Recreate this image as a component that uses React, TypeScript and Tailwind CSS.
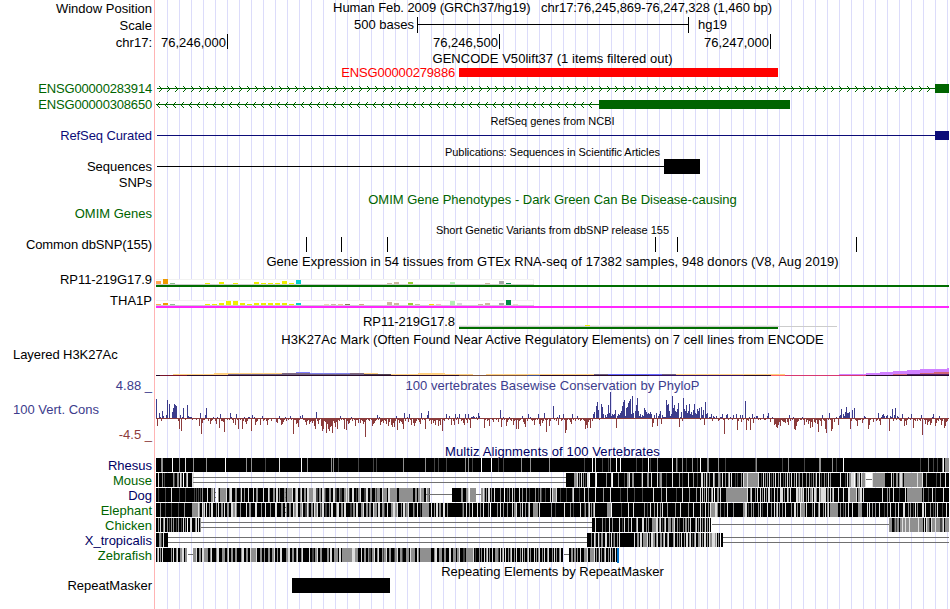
import React from "react";

type Chunk = [number, string];
type Rect = [number, number, number, number, string];

const SHADES: Record<string, string> = {
  "#": "#000000",
  d: "#444444",
  g: "#909090",
  l: "#dedede",
};

// Alignment shading, one character per pixel, each chunk starting at its x.
const MOUSE: Chunk[] = [
  [156, "##l###g#d########gd##gg#lg#.##gl####ll"],
  [566, "########gggl#g#l#g#d#ll.#####l.#########g####l.#####g#####d##ggl"],
  [630, "##gg#######dl####gg##l#####l#dgg####d#####l######g##d#####l####g###d#"],
  [699, "##ll#g#ld#g###lg###ggd#l##g##gl#l###d#d###g#lggglggggggggggl##d#l#g#g#l#d#"],
  [773, "g#l##g#l##d#g#l#g#l##g#l#dg##g###g##g#d#g#dl##l#d##g#d#l#g#########l"],
  [841, "####d#l#gglll.g#ggl#lgggl"],
  [872, "lgggggggggggg######l#g##gg#gllg#ggggggggggggglggggl###g#########d###g####l###"],
];
const DOG: Chunk[] = [
  [156, "##d######d#####l#######d#####d########d#d#d#d#g##"],
  [205, "##l###ggld"],
  [218, "g#ggggggl##gll###gg###dl##g###l####l##gg#####l####lg###gg#ll#g####gg##l"],
  [287, "gggggl##gll##gl##gg#llggggllldd#gg#llgd###gg##lldd##gdd##gglgld##ll##d#ggl##dd"],
  [362, "##ddll##gg###gdggg##lgggg#llggggggg##gggggggggggggg##gg#gglggg##lggd"],
  [452, "#########gg###ggl.gggggg"],
  [481, "gglg#g#ll#g##l#####g###.##d#g##l#g####l##g###g##d#####g##d#gd###d####"],
  [550, "l#lgggl###d#####d#####gl#####d####l###g######l#######g######l###"],
  [614, "######d######g######d#######d##########l#######g####l#########d#####l"],
  [683, "######g######g###l#l#g#l#g##gl#.##gg#l#####gggggggggggggggggggggl##gl#"],
  [753, "##g#l##l#g#l#g#ll#d##l##g##lll#g##lg#l#####llglglgl##g#l#ggl#llg##lglllll"],
  [826, "#gg#l#gl####l####l####llggggggl#ggll#l##################l####g#g###l#####"],
  [899, "d#####l#ggggggggggggggg#g####d###l##d#######l######"],
];
const ELEPHANT: Chunk[] = [
  [156, "####g####d#####d######d#####g#######gggggglg##lgl#l##g#ll###g#l##gg#l"],
  [225, "##gg##llgglg###g#####l##gg####ll####g###l####g####ll####gg##lg##gg##lggl#"],
  [296, "ll##ggl##ddlg##gg#lggl##gdll#dd##g#ll###gll##gg#ll####dd#gg#ll###ggl##gg#l"],
  [368, "#gg##lggg#ll##ggd##l###ggllggl###g#lldggl####gd##l##d#ggggggg##l##g#ll#gg###"],
  [442, "#ll##g##############dg##l##g##l####l##g##l####g#.######g##l##g###g####l#ggl##"],
  [518, "##g#l##g##gl###ggggg#l###########g###d########l#####g##d######l###dg##gl#g#gl"],
  [595, "############gggg.#########d######l####l##########g##d##l###g##l##g#l####g######"],
  [674, "#g####l#######g####l######l#d##l##g#lggggllg##g###d##l#####g#########ggll#d##g"],
  [752, "#g####g#l#d####l###g##l#gl#g##g##l#####g##ll#g##lgggg#l#####g#l###gl###g#l#gl"],
  [829, "#gggggggg##g##d#g##l###l#####gggg#####l#l##g##g###l####d##g##l####g##l####ll#"],
  [906, "##g#g##d#l#g####ll#l####g##d#g#l####d###l##"],
];
const CHICKEN: Chunk[] = [
  [156, "##g#l##gl##g#d#g#g##d#g##d#l#g#.##ll###gl#l#g"],
  [592, "###l######g##d###l##g######l##d#l###g##l####gl##"],
  [640, "##ll##g#g###ggggll#gl#d#gl##ggg#ggl##g#d###g#gg#g#l####gl#g#l#g#dl#g#l#"],
  [889, "ggg##dgdgg#gglgglggglgggggggglgggg#l#lggd#lggglggggddgl#gggg"],
];
const XTROP: Chunk[] = [
  [156, "###ggd#l####"],
  [587, "####g##lg##ld#gg##ll##g#l#dg##g#l##############l##gg#ll#ggggl#g#ll"],
  [653, "gg#gl##gg#gl##gl####gl##g#g#l##g#ll#gl#d#gl##ggl#g#ll#g#lgglllgl#g#.##"],
];
const ZEBRAFISH: Chunk[] = [
  [156, "#gl#g#l########g#l##gl##ggll#gg"],
  [193, "gggl##gg#llgggg##gl####gll###ggg##gl##gg##gg####gll##gg##lgggggl###gg##ggg##l"],
  [265, "###gg##ggl##g##ll####ggll##gg##gl###gl######l##dd#ggl##gg#####gg#ll##ggl##dgg"],
  [336, "gg#ll#gggggggggglllggg###l##gg##gdd#ggl##gl###gdggl##gg###dggl##ggd###ggg#lggg"],
  [413, "gg##lg#ggggggggggg"],
  [431, "###gll##ggg##gg###ll##ggg#ggl###dd#gggggggl#d###g#g##l#gl#g##l##gggd#l#gl##"],
  [505, "l##g#gl##g#l###g#l#g##gl#g###l#g#gl##g#l##gl###g#l#g##gl##"],
  [569, "##gg#gg#g##l###gggl##ggggl#g#dl#g##gl##g#l#g##l#"],
];
const RHESUS_STRIPES: [number, string][] = [
  [161, "gg"], [172, "."], [179, "g"], [185, "l"], [193, "g"], [206, "g"], [225, "."], [246, "g"],
  [251, "g"], [265, "d"], [279, "l"], [301, "."], [307, "g"], [331, "g"], [333, "g"], [338, "d"],
  [358, "d"], [373, "d"], [376, "d"], [403, "g"], [425, "g"], [434, "d"], [438, "d"], [446, "d"],
  [465, "g"], [468, "g"], [472, "d"], [481, "."], [491, "."], [498, "d"], [503, "d"], [521, "g"],
  [530, "g"], [549, "g"], [584, "d"], [592, "."], [595, "l"], [602, "d"], [608, "d"], [610, "g"],
  [616, "."], [620, "."], [636, "d"], [642, "d"], [648, "."], [650, "d"], [657, "g"], [672, "."],
  [676, "gd"], [682, "g"], [686, "d"], [692, "g"], [697, "d"], [700, "."], [707, "gg"], [718, "g"],
  [725, "d"], [755, "d"], [756, "g"], [782, "d"], [788, "g"], [804, "d"], [819, "gg"], [832, "g"],
  [836, "d"], [843, "."], [920, "d"], [928, "g"], [933, "d"], [937, "d"], [942, "g"], [943, "."],
  [945, "gggg"],
];

// Conservation scores: capitals rise above the zero line, small letters fall below it.
const PHYLOP: Chunk[] = [
  [156, "ShaEAcGBaaCRaNaaFJNMLackCmAJabaMBAAAbaaabaahEpebbCJacafcbAacfAajDccdnaababEAbeagDbkabakc"],
  [244, "AdfcAAamCaAgdcaagaBcbacgbaacaaaadeaBbgfdbAcabaBbapbbfeibBaCbbdgcbfdcechkFcfbahmkcdo"],
  [327, "fkmihoceidkbcBbabkalcfebAcabhbbeaebcfdsbabcabhfecbCbAgdcebcfahdagieicBlbecdfkEcaAd"],
  [409, "DbgaehecabdfEbabkaCGcbfbecgbbhcgambcaDabBagacgDbAfDacbegDbeDbjAABAaAbEBaaaajbacbhaabda"],
  [495, "abadaHibAbahdbAbcagcbkbkcbaBdfiacDaAbcbgbabDfhbecEbnbahcaaLbacAgCacbDbolbabdfDbac"],
  [576, "aBbacbabckgjdbjacDFaLPHbaNKDaCADMEZBDCDHjBD"],
  [619, "CEGLPRBJKOQSDVEaGMTGBDACBJHFDEDFDieCaEhBDGfCAAAR"],
  [667, "MNGBDVJMGFIOiAFcTIGMEGNDFCHNEDIGJbKCHgPDEaAADcBAaBacbAADbpaCDbaAabCaaDlcaCdCbaQlbcA"],
  [750, "laDeAaBBbabaaDbbaBEadaAagfijgdhbcddeadgCcabAklhdcabbAbgadbfcjdiadebfnbchCbckoabEbmk"],
  [833, "adaAagBCIaDBFKEEFkcHaJbchbbbaebBAaakgbaadaacbEcgACDBaBCamBAIcCJbBAbccDahcgbAabDaj"],
  [914, "bcacabcCqabfbgdcgeADahebcBbgcajhdcaaaaaaA"],
];

const INTRON = "#006400";

function alignmentRects(chunks: Chunk[], top: number): Rect[] {
  const out: Rect[] = [];
  for (const [x, cells] of chunks) {
    let i = 0;
    while (i < cells.length) {
      let j = i + 1;
      while (j < cells.length && cells[j] === cells[i]) j++;
      const width = Math.min(j - i, 949 - x - i);
      if (width > 0) out.push([x + i, top, width, 14, SHADES[cells[i]] ?? "#ffffff"]);
      i = j;
    }
  }
  return out;
}

function phylopRects(): Rect[] {
  const out: Rect[] = [[156, 418, 793, 1, "#8c3c3c"]];
  for (const [x, s] of PHYLOP) {
    [...s].forEach((c, i) => {
      if (x + i > 948) return;
      const code = c.charCodeAt(0);
      if (code < 91) out.push([x + i, 418 - (code - 64), 1, code - 64, "#3c3c8c"]);
      else out.push([x + i, 418, 1, code - 96, "#8c3c3c"]);
    });
  }
  return out;
}

const T = "#cdb79e";
const Y = "#eeee00";
const GTEX_A: [number, number, string][] = [
  [156, 3, "#ffa54f"], [163, 5, "#ee9a00"], [170, 1, "#8fbc8f"], [205, 1, Y], [219, 2, Y], [233, 1, Y],
  [254, 2, Y], [261, 1, Y], [268, 1, Y], [275, 1, Y], [282, 3, Y], [289, 1, Y], [296, 4, "#00cdcd"],
  [387, 1, T], [394, 2, T], [408, 2, "#9acd32"], [450, 2, "#b4eeb4"], [485, 1, T], [499, 3, "#a6a6a6"],
  [506, 1, "#008b45"],
];
const GTEX_B: [number, number, string][] = [
  [156, 1, "#ffa54f"], [163, 2, "#ee9a00"], [170, 1, "#8fbc8f"], [205, 1, Y], [212, 1, Y], [219, 2, Y],
  [226, 4, Y], [233, 4, Y], [240, 2, Y], [247, 1, Y], [254, 2, Y], [261, 2, Y], [268, 2, Y], [275, 2, Y],
  [282, 2, Y], [289, 1, Y], [296, 2, "#00cdcd"], [324, 1, "#eed5b7"], [331, 1, T], [338, 1, "#eec591"],
  [345, 1, "#8b7355"], [359, 1, "#cdaa7d"], [387, 3, T], [394, 2, T], [408, 2, "#9acd32"], [415, 1, T],
  [429, 1, "#ffd700"], [436, 1, "#ffb6c1"], [450, 4, "#b4eeb4"], [457, 2, "#d9d9d9"], [478, 1, T],
  [485, 2, T], [499, 2, "#a6a6a6"], [506, 5, "#008b45"], [513, 1, "#eed5d2"],
];

function gtex(bars: [number, number, string][], bottom: number, line: string): Rect[] {
  return [
    [156, bottom - 5, 378, 6, "#f2f2f2"],
    [156, bottom - 4, 377, 4, "#ffffff"],
    [156, bottom, 378, 1, "#cccccc"],
    ...bars.map(([x, h, c]): Rect => [x, bottom - h, 5, h, c]),
    [156, bottom + 1, 793, 2, line],
  ];
}

const H3K: Rect[] = [
  [173, 374, 41, 1, "#ffd080"], [214, 373, 68, 1, "#ffd080"], [214, 374, 14, 1, "#ffd080"],
  [228, 374, 136, 1, "#706080"], [282, 373, 28, 1, "#806880"], [296, 372, 14, 1, "#8080ff"],
  [310, 373, 40, 1, "#8080e8"], [350, 373, 14, 1, "#806880"], [364, 373, 14, 1, "#ffd080"],
  [364, 374, 27, 1, "#504050"], [391, 374, 82, 1, "#ffd080"], [418, 373, 27, 1, "#ffd080"],
  [486, 374, 108, 1, "#ffd080"], [594, 374, 14, 1, "#706080"], [608, 374, 54, 1, "#6464ff"],
  [662, 374, 14, 1, "#706080"], [676, 374, 109, 1, "#ffd080"],
  [156, 375, 793, 1, "#280a28"], [160, 375, 27, 1, "#78142c"], [459, 375, 68, 1, "#785040"],
  [527, 375, 13, 1, "#405090"], [649, 375, 95, 1, "#341060"], [771, 375, 14, 1, "#ff6464"],
  [785, 375, 81, 1, "#d83870"],
  [839, 374, 27, 1, "#d080ff"], [866, 373, 14, 2, "#d080ff"], [880, 372, 13, 3, "#d080ff"],
  [893, 371, 14, 3, "#d080ff"], [907, 370, 13, 4, "#d080ff"], [920, 369, 27, 4, "#d080ff"],
  [947, 368, 2, 4, "#d080ff"], [893, 374, 14, 1, "#d06478"], [907, 374, 42, 1, "#502070"],
  [920, 373, 14, 1, "#d06478"], [934, 372, 15, 2, "#d06478"],
];

const GRID_X = Array.from({ length: 66 }, (_, i) => 167 + i * 12);

function Canvas({ top, height, rects = [], children }: { top: number; height: number; rects?: Rect[]; children?: React.ReactNode }) {
  return (
    <svg
      className="absolute left-0 top-0 overflow-visible"
      width={795}
      height={height}
      viewBox={`155 ${top} 795 ${height}`}
      shapeRendering="crispEdges"
    >
      {rects.map(([x, y, w, h, fill], i) => (
        <rect key={i} x={x} y={y} width={w} height={h} fill={fill} />
      ))}
      {children}
    </svg>
  );
}

function Row({ h, label = "", tone = "text-black", children }: { h: string; label?: string; tone?: string; children?: React.ReactNode }) {
  return (
    <div className={`flex shrink-0 ${h}`}>
      <div className={`flex w-[155px] shrink-0 items-center justify-end pr-[3px] ${tone}`}>{label}</div>
      <div className="relative flex w-[795px] shrink-0 items-center">{children}</div>
    </div>
  );
}

function Title({ className = "", children }: { className?: string; children: React.ReactNode }) {
  return <div className={`relative w-[795px] text-center ${className}`}>{children}</div>;
}

const SPECIES: { name: string; tone: string; chunks: Chunk[]; lines: [number, number, number][] }[] = [
  { name: "Rhesus", tone: "text-[#000064]", chunks: [[156, "#".repeat(793)], ...RHESUS_STRIPES], lines: [] },
  { name: "Mouse", tone: "text-[#006400]", chunks: MOUSE, lines: [[193, 373, 4], [193, 373, 9], [866, 6, 6]] },
  { name: "Dog", tone: "text-[#000064]", chunks: DOG, lines: [[426, 26, 6], [476, 5, 6], [215, 1, 4], [215, 1, 9], [285, 1, 4], [285, 1, 9]] },
  { name: "Elephant", tone: "text-[#006400]", chunks: ELEPHANT, lines: [[285, 1, 4], [285, 1, 9]] },
  { name: "Chicken", tone: "text-[#006400]", chunks: CHICKEN, lines: [[201, 391, 4], [201, 391, 9], [712, 177, 6]] },
  { name: "X_tropicalis", tone: "text-[#000064]", chunks: XTROP, lines: [[168, 419, 4], [168, 419, 9], [723, 226, 4], [723, 226, 9]] },
  { name: "Zebrafish", tone: "text-[#006400]", chunks: ZEBRAFISH, lines: [[188, 5, 6], [564, 5, 6]] },
];

export default function App() {
  return (
    <div className="relative flex h-[609px] w-[950px] flex-col overflow-hidden bg-white font-['Liberation_Sans',Arial,sans-serif] text-[13px] leading-[15px] whitespace-pre text-black">
      <svg className="absolute left-0 top-0" width={950} height={609} shapeRendering="crispEdges">
        {GRID_X.map((x) => (
          <rect key={x} x={x} y={0} width={1} height={609} fill="#dcdcfa" />
        ))}
        <rect x={154} y={0} width={1} height={609} fill="#ffb4b4" />
      </svg>

      <Row h="h-[17px]" label="Window Position">
        <Title className="-mt-[3px] tracking-[-0.07px]">Human Feb. 2009 (GRCh37/hg19)   chr17:76,245,869-76,247,328 (1,460 bp)</Title>
      </Row>
      <Row h="h-[17px]" label="Scale">
        <Canvas top={17} height={17} rects={[[417, 17, 1, 16, "#000"], [688, 17, 1, 16, "#000"], [417, 24, 272, 1, "#000"]]} />
        <div className="-mt-[2px] w-[259px] text-right">500 bases</div>
        <div className="-mt-[2px] ml-[284px]">hg19</div>
      </Row>
      <Row h="h-[17px]" label="chr17:">
        <Canvas top={34} height={17} rects={[[227, 34, 1, 15, "#000"], [499, 34, 1, 15, "#000"], [770, 34, 1, 15, "#000"]]} />
        <div className="w-[71px] text-right">76,246,000</div>
        <div className="w-[272px] text-right">76,246,500</div>
        <div className="w-[271px] text-right">76,247,000</div>
      </Row>
      <Row h="h-[14px]">
        <Title className="tracking-[0.04px]">GENCODE V50lift37 (1 items filtered out)</Title>
      </Row>
      <Row h="h-[15px]">
        <Canvas top={65} height={15} rects={[[459, 68, 319, 9, "#ff0000"]]} />
        <div className="w-[300px] text-right tracking-[-0.18px] text-[#ff0000]">ENSG00000279886</div>
      </Row>
      <Row h="h-[16px]" label="ENSG00000283914" tone="text-[#006400] tracking-[-0.18px]">
        <Canvas top={80} height={16} rects={[[157, 88, 778, 1, INTRON], [935, 84, 14, 9, INTRON]]}>
          {Array.from({ length: 97 }, (_, i) => (
            <path key={i} d={`M${159 + i * 8} 86h1v1h1v1h2v1h-1v1h-1v1h-1v1h-1v-1h1v-1h1v-2h-1v-1h-1z`} fill={INTRON} />
          ))}
        </Canvas>
      </Row>
      <Row h="h-[16px]" label="ENSG00000308650" tone="text-[#006400] tracking-[-0.18px]">
        <Canvas top={96} height={16} rects={[[157, 104, 442, 1, INTRON], [599, 100, 191, 9, INTRON]]}>
          {Array.from({ length: 55 }, (_, i) => (
            <path key={i} d={`M${160 + i * 8} 102h-1v1h-1v1h-2v1h1v1h1v1h1v1h1v-1h-1v-1h-1v-2h1v-1h1z`} fill={INTRON} />
          ))}
        </Canvas>
      </Row>
      <Row h="h-[16px]">
        <Title className="mt-[3px] text-[11px]">RefSeq genes from NCBI</Title>
      </Row>
      <Row h="h-[15px]" label="RefSeq Curated" tone="text-[#0c0c78] tracking-[-0.1px]">
        <Canvas top={128} height={15} rects={[[157, 135, 778, 1, "#0c0c78"], [935, 131, 14, 9, "#0c0c78"]]} />
      </Row>
      <Row h="h-[16px]">
        <Title className="mt-[3px] text-[11px] tracking-[-0.06px]">Publications: Sequences in Scientific Articles</Title>
      </Row>
      <Row h="h-[15px]" label="Sequences">
        <Canvas top={159} height={15} rects={[[157, 166, 508, 1, "#000"], [664, 159, 36, 15, "#000"]]} />
      </Row>
      <Row h="h-[17px]" label="SNPs" />
      <Row h="h-[15px]">
        <Title className="mt-[2px] text-[#006400]">OMIM Gene Phenotypes - Dark Green Can Be Disease-causing</Title>
      </Row>
      <Row h="h-[15px]" label="OMIM Genes" tone="text-[#006400]" />
      <Row h="h-[16px]">
        <Title className="mt-[3px] text-[11px]">Short Genetic Variants from dbSNP release 155</Title>
      </Row>
      <Row h="h-[15px]" label="Common dbSNP(155)" tone="text-black tracking-[-0.11px]">
        <Canvas top={237} height={15} rects={[306, 341, 387, 655, 677, 856].map((x): Rect => [x, 237, 1, 15, "#000"])} />
      </Row>
      <Row h="h-[19px]">
        <Title className="tracking-[0.055px]">Gene Expression in 54 tissues from GTEx RNA-seq of 17382 samples, 948 donors (V8, Aug 2019)</Title>
      </Row>
      <Row h="h-[19px]" label="RP11-219G17.9" tone="pb-[2px] text-black tracking-[-0.08px]">
        <Canvas top={271} height={19} rects={gtex(GTEX_A, 284, "#006e00")} />
      </Row>
      <Row h="h-[21px]" label="THA1P">
        <Canvas top={290} height={21} rects={gtex(GTEX_B, 305, "#ff28ff")} />
      </Row>
      <Row h="h-[21px]">
        <Canvas
          top={311}
          height={21}
          rects={[[459, 325, 319, 1, "#f0f0f0"], [459, 326, 378, 1, "#cccccc"], [585, 325, 5, 1, Y], [459, 327, 319, 2, "#006e00"]]}
        />
        <div className="w-[300px] text-right tracking-[-0.08px]">RP11-219G17.8</div>
      </Row>
      <Row h="h-[15px]">
        <Title className="tracking-[0.058px]">H3K27Ac Mark (Often Found Near Active Regulatory Elements) on 7 cell lines from ENCODE</Title>
      </Row>
      <div className="flex h-[30px] shrink-0">
        <div className="w-[155px] shrink-0 pl-[13px] tracking-[-0.06px]">Layered H3K27Ac</div>
        <div className="relative w-[795px]">
          <Canvas top={347} height={30} rects={H3K} />
        </div>
      </div>
      <Row h="h-[16px]" label="4.88 _" tone="text-[#3c3c8c]">
        <Title className="tracking-[0.04px] text-[#3c3c8c]">100 vertebrates Basewise Conservation by PhyloP</Title>
      </Row>
      <div className="flex h-[51px] shrink-0">
        <div className="flex w-[155px] shrink-0 flex-col justify-between pt-[9px] pb-[2px]">
          <div className="pl-[13px] text-[#3c3c8c]">100 Vert. Cons</div>
          <div className="pr-[3px] text-right text-[#8c3c3c]">-4.5 _</div>
        </div>
        <div className="relative w-[795px]">
          <Canvas top={393} height={51} rects={phylopRects()} />
        </div>
      </div>
      <Row h="h-[14px]">
        <Title className="tracking-[0.11px] text-[#000064]">Multiz Alignments of 100 Vertebrates</Title>
      </Row>
      {SPECIES.map((s, i) => {
        const top = 458 + i * 15;
        return (
          <Row key={s.name} h="h-[15px]" label={s.name} tone={s.tone}>
            <Canvas top={top} height={15} rects={alignmentRects(s.chunks, top)}>
              {s.lines.map(([x, w, dy]) => (
                <rect key={`${x}-${dy}`} x={x} y={top + dy} width={w} height={1} fill="#707070" />
              ))}
              {s.name === "Zebrafish" && <rect x={617} y={top} width={2} height={15} fill="#0070c8" />}
            </Canvas>
          </Row>
        );
      })}
      <Row h="h-[15px]">
        <Title className="mt-[2px]">Repeating Elements by RepeatMasker</Title>
      </Row>
      <Row h="h-[15px]" label="RepeatMasker">
        <Canvas top={578} height={15} rects={[[292, 578, 98, 15, "#000"]]} />
      </Row>
    </div>
  );
}
